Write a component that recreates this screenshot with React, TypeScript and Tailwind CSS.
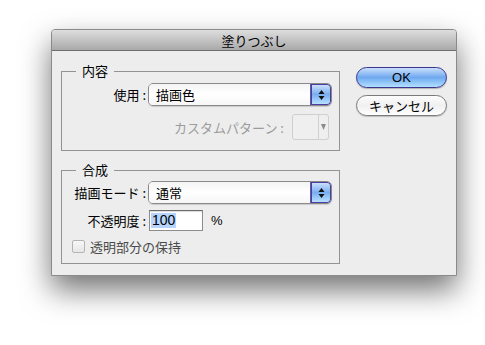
import React from "react";

const font = { fontFamily: '"Noto Sans CJK JP", "Noto Sans", sans-serif' };

function Arrows() {
  return (
    <svg width="7" height="12" viewBox="0 0 7 12">
      <path d="M3.5 1 L6.5 5 L0.5 5 Z" fill="#111" />
      <path d="M3.5 11 L6.5 7 L0.5 7 Z" fill="#111" />
    </svg>
  );
}

function Popup({ text }: { text: string }) {
  return (
    <div className="flex h-[23px] w-[184px] rounded-[5px] border border-[#8a8a8a] overflow-hidden shadow-[0_1px_1px_rgba(0,0,0,0.15)]">
      <div className="flex-1 flex items-center pl-[7px] bg-gradient-to-b from-[#f4f4f4] via-white to-[#f6f6f6] text-[13px] leading-none text-black">
        {text}
      </div>
      <div className="w-[21px] flex items-center justify-center border-l border-[#5c5ca8] rounded-r-[4px] bg-gradient-to-b from-[#d3e4fb] via-[#78aef0] to-[#bfe6ff] shadow-[inset_0_0_0_1px_#4a3f9e]">
        <Arrows />
      </div>
    </div>
  );
}

export default function App() {
  return (
    <div className="w-[485px] h-[345px] bg-white pt-[29px] pl-[51px]" style={font}>
      <div className="w-[406px] h-[247px] border border-[#8a8a8a] rounded-t-[4px] bg-[#ededed] shadow-[0_14px_30px_rgba(0,0,0,0.55)] flex flex-col">
        <div className="h-[21px] shrink-0 border-b border-[#6f6f6f] rounded-t-[3px] bg-gradient-to-b from-[#dedede] to-[#a9a9a9] flex items-center justify-center text-[13px] leading-none text-black">
          塗りつぶし
        </div>
        <div className="flex flex-1 pl-[9px] pr-[9px]">
          <div className="w-[279px] pt-[12px] flex flex-col">
            <fieldset className="border border-[#939393] pb-[10px]">
              <legend className="ml-[14px] px-[6px] text-[13px] leading-[16px] text-black">内容</legend>
              <div className="mt-[4px] flex items-center">
                <span className="w-[84px] text-right text-[13px] leading-none text-black">使用 :</span>
                <div className="ml-[2px]">
                  <Popup text="描画色" />
                </div>
              </div>
              <div className="mt-[8px] flex items-center justify-end pr-[10px]">
                <span className="text-[13px] leading-none text-[#9c9c9c]">カスタムパターン :</span>
                <div className="ml-[8px] w-[37px] h-[26px] rounded-[3px] border border-[#cfcfcf] bg-[#efefef] flex">
                  <div className="flex-1" />
                  <div className="w-[10px] border-l border-[#d0d0d0] flex items-center justify-center">
                    <svg width="5" height="6" viewBox="0 0 5 6">
                      <path d="M0 0 L5 0 L2.5 6 Z" fill="#8a8a8a" />
                    </svg>
                  </div>
                </div>
              </div>
            </fieldset>
            <fieldset className="mt-[11px] border border-[#939393] pb-[10px]">
              <legend className="ml-[14px] px-[6px] text-[13px] leading-[16px] text-black">合成</legend>
              <div className="mt-[3px] flex items-center">
                <span className="w-[84px] text-right text-[13px] leading-none text-black whitespace-nowrap">描画モード :</span>
                <div className="ml-[2px]">
                  <Popup text="通常" />
                </div>
              </div>
              <div className="mt-[6px] flex items-center">
                <span className="w-[84px] text-right text-[13px] leading-none text-black">不透明度 :</span>
                <div className="ml-[3px] w-[54px] h-[21px] border border-[#8c8c8c] border-t-[#6a6a6a] bg-white flex items-center pl-[1px] shadow-[inset_0_1px_1px_rgba(0,0,0,0.15)]">
                  <span
                    className="bg-[#b5d5ff] text-[14px] leading-[15px] text-black px-[1px]"
                    style={{ fontFamily: '"Liberation Sans", Arial, sans-serif' }}
                  >
                    100
                  </span>
                </div>
                <span
                  className="ml-[8px] text-[13px] leading-none text-black"
                  style={{ fontFamily: '"Liberation Sans", Arial, sans-serif' }}
                >
                  %
                </span>
              </div>
              <div className="mt-[9px] flex items-center pl-[10px]">
                <div className="w-[13px] h-[13px] rounded-[2px] border border-[#b4b4b4] bg-gradient-to-b from-[#f7f7f7] to-[#e6e6e6]" />
                <span className="ml-[5px] text-[13px] leading-none text-[#4a4a4a]">透明部分の保持</span>
              </div>
            </fieldset>
          </div>
          <div className="ml-[16px] w-[91px] pt-[16px] flex flex-col gap-[7px]">
            <div className="h-[21px] rounded-full border border-[#3b3590] bg-gradient-to-b from-[#c8defa] via-[#6fa9ef] to-[#b2e0ff] flex items-center justify-center text-[13px] leading-none text-black shadow-[0_1px_1px_rgba(0,0,0,0.25)]"
              style={{ fontFamily: '"Liberation Sans", "Noto Sans CJK JP", sans-serif' }}
            >
              OK
            </div>
            <div className="h-[21px] rounded-full border border-[#7a7a7a] bg-gradient-to-b from-[#fdfdfd] via-[#f0f0f0] to-[#fefefe] flex items-center justify-center text-[13px] leading-none text-black shadow-[0_1px_1px_rgba(0,0,0,0.2)]">
              キャンセル
            </div>
          </div>
        </div>
      </div>
    </div>
  );
}
